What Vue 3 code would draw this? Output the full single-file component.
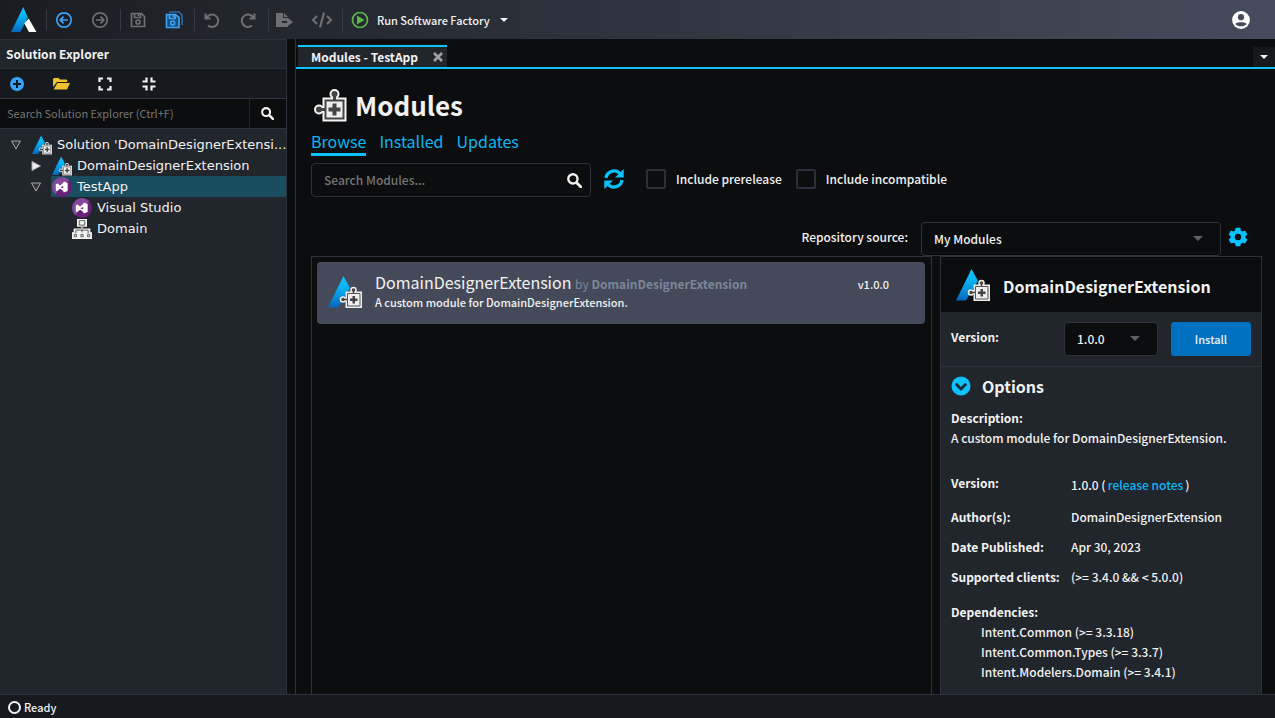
<script setup>
import { ref } from 'vue'

const solutionFilter = ref('')
const moduleFilter = ref('')
const prerelease = ref(false)
const incompatible = ref(false)
const source = ref('My Modules')
const version = ref('1.0.0')

const tree = [
  { label: "Solution 'DomainDesignerExtensi...", level: 0, icon: 'module', state: 'open' },
  { label: 'DomainDesignerExtension', level: 1, icon: 'module', state: 'closed' },
  { label: 'TestApp', level: 1, icon: 'vs', state: 'open', selected: true },
  { label: 'Visual Studio', level: 2, icon: 'vs' },
  { label: 'Domain', level: 2, icon: 'domain' },
]
const tabs = ['Browse', 'Installed', 'Updates']
const dependencies = [
  'Intent.Common (>= 3.3.18)',
  'Intent.Common.Types (>= 3.3.7)',
  'Intent.Modelers.Domain (>= 3.4.1)',
]
</script>

<template>
  <div class="app">
    <svg class="defs" aria-hidden="true">
      <defs>
        <linearGradient id="blue" x1="0" y1="0" x2="0" y2="1">
          <stop offset="0" stop-color="#0fc5ff" />
          <stop offset="0.4" stop-color="#08b0f0" />
          <stop offset="1" stop-color="#0566bd" />
        </linearGradient>
        <linearGradient id="purple" x1="0" y1="0" x2="1" y2="1">
          <stop offset="0.5" stop-color="#84489a" />
          <stop offset="0.5" stop-color="#672179" />
        </linearGradient>
      </defs>
      <symbol id="puzzle" viewBox="0 0 33 33">
        <circle cx="20.500" cy="5" r="4" fill="#444" stroke="#f5f5f5" stroke-width="2" />
        <circle cx="5" cy="20.500" r="4" fill="#444" stroke="#f5f5f5" stroke-width="2" />
        <path d="M8.500 8.500h24v24h-24z" fill="#f5f5f5" />
        <path d="M19 5h3v6h-3zM5 19h6v3H5z" fill="#444" />
        <path d="M11.500 11.500h18v18h-18z" fill="#eee" stroke="#444" stroke-width="2" />
        <path d="M18.500 14.500h4v4h4v4h-4v4h-4v-4h-4v-4h4z" fill="#444" />
      </symbol>
      <symbol id="module" viewBox="0 0 34 32">
        <path d="M0 31.500 15.500 0l6.500 12-12 19.500z" fill="url(#blue)" />
        <circle cx="25.500" cy="14" r="2.500" fill="#444" stroke="#eee" stroke-width="1.500" />
        <circle cx="15" cy="23.500" r="2.500" fill="#444" stroke="#eee" stroke-width="1.500" />
        <path d="M17.500 15.500H34V32H17.500z" fill="#eee" />
        <path d="M24.700 14h1.600v4h-1.600zM15 22.700h4v1.600h-4z" fill="#444" />
        <path d="M19.500 17.500h12.500V30H19.500z" fill="#eee" stroke="#555" />
        <path d="M24.500 20h2.500v2.500h2.500V25H27v2.500h-2.500V25H22v-2.500h2.500z" fill="#444" />
      </symbol>
      <symbol id="vs" viewBox="0 0 18 18">
        <circle cx="9" cy="9" r="9" fill="url(#purple)" />
        <path d="M4.300 6.300v5.400L11 5.500v7L4.300 6.300" fill="none" stroke="#fff" stroke-width="1.800" stroke-linejoin="round" />
        <path d="m10.500 4 3.600 1.500v7L10.500 14z" fill="#fff" />
      </symbol>
      <symbol id="domain" viewBox="0 0 18 18">
        <path d="M4.500 0h9v7h-9zM0 12h6v6H0zm6 0h6v6H6zm6 0h6v6h-6zM1.500 8.500h15V13h-15zM8 6h2v4H8z" fill="#f2f2f2" />
        <path d="M6.500 1.500h5v4h-5zM9 6v6M3.500 13v-3h11v3M2 14h2v2H2zm6 0h2v2H8zm6 0h2v2h-2z" fill="none" stroke="#555" stroke-width=".8" />
      </symbol>
      <symbol id="search" viewBox="0 0 14 14">
        <circle cx="5.500" cy="5.500" r="4.300" fill="none" stroke="currentColor" stroke-width="2.200" />
        <path d="m9 9 3.800 3.800" stroke="currentColor" stroke-width="2.600" stroke-linecap="round" />
      </symbol>
    </svg>

    <header class="topbar">
      <svg class="logo" viewBox="0 0 26 26">
        <path d="M0 25 12.300 0l4.500 10.500L9.500 25z" fill="url(#blue)" />
        <path d="m13.300 16.200 4.400-4.700L25.500 25h-7.600z" fill="#fff" />
      </svg>
      <div class="group">
        <button class="tool blue" aria-label="Back">
          <svg viewBox="0 0 18 18"><circle cx="9" cy="9" r="7.200" /><path d="M13 9H5.500M8.500 5.700 5.200 9l3.300 3.300" /></svg>
        </button>
        <button class="tool" aria-label="Forward">
          <svg viewBox="0 0 18 18"><circle cx="9" cy="9" r="7.200" /><path d="M5 9h7.500M9.500 5.700 12.800 9l-3.300 3.300" /></svg>
        </button>
      </div>
      <div class="group">
        <button class="tool" aria-label="Save">
          <svg viewBox="0 0 18 18"><path d="M2.500 2.500h10l3 3v10h-13zM5.500 2.500v4h6v-4" /><circle cx="9" cy="11" r="2" /><path d="M9.500 3v2" /></svg>
        </button>
        <button class="tool blue" aria-label="Save all">
          <svg viewBox="0 0 18 18"><path class="behind" d="M4 1h10l3 3v10" /><path class="tint" d="M1.500 3.500h9l3.500 3v10H1.500z" /><path d="M4.500 4v3.500h5.500V4" /><circle cx="7.700" cy="12" r="2" /><path d="M8.500 4v2" /></svg>
        </button>
      </div>
      <div class="group">
        <button class="tool" aria-label="Undo">
          <svg viewBox="0 0 18 18"><path d="M2.500 2.500v5h5M3.500 7A6.200 6.200 0 1 1 5 14.500" stroke-width="2" /></svg>
        </button>
        <button class="tool" aria-label="Redo">
          <svg viewBox="0 0 18 18"><path d="M15.500 2.500v5h-5M14.500 7A6.200 6.200 0 1 0 13 14.500" stroke-width="2" /></svg>
        </button>
      </div>
      <div class="group">
        <button class="tool" aria-label="Export">
          <svg viewBox="0 0 18 18"><path class="solid" d="M1 2h7v5h5v3H7v2h6v4H1zM9 2l4 4H9zM13 7l5 4-5 4v-3h-1v-2h1z" /></svg>
        </button>
        <button class="tool wide" aria-label="Code">
          <svg viewBox="0 0 22 18"><path d="M6 5 2 9l4 4M16 5l4 4-4 4M13 1.500l-4 15" stroke-width="2.200" /></svg>
        </button>
      </div>
      <button class="run">
        <svg class="play" viewBox="0 0 18 18"><circle cx="9" cy="9" r="7.500" fill="none" stroke="#5bb84a" stroke-width="1.700" /><path d="M6 4.500 13.500 9 6 13.500z" fill="#5bb84a" /></svg>
        Run Software Factory
        <i class="caret"></i>
      </button>
      <button class="user" aria-label="Account">
        <svg viewBox="0 0 18 18"><circle cx="9" cy="9" r="8" fill="#fff" /><circle cx="9" cy="6.500" r="2.800" fill="#444a59" /><path d="M3.800 12.500C5 10.500 13 10.500 14.200 12.500 11.500 15.300 6.500 15.300 3.800 12.500z" fill="#444a59" /></svg>
      </button>
    </header>

    <div class="body">
      <aside class="sidebar">
        <h2 class="side-title">Solution Explorer</h2>
        <div class="side-tools">
          <button aria-label="Add"><svg viewBox="0 0 14 14"><circle cx="7" cy="7" r="7" fill="#3ba3f5" /><path d="M7 3v8M3 7h8" stroke="#16191d" stroke-width="2" /></svg></button>
          <button aria-label="Open"><svg class="folder" viewBox="0 0 17 12"><path d="M0 9V1l1-1h4.500l1.500 1.500h6.500l.8.800V4H4z" fill="#eec22f" /><path d="M4.300 5H17l-3 6.500H.7z" fill="#eec22f" /></svg></button>
          <button aria-label="Expand all"><svg viewBox="0 0 14 14"><path d="M1.500 5V1.500H5M9 1.500h3.500V5M12.500 9v3.500H9M5 12.500H1.500V9" fill="none" stroke="#f2f2f2" stroke-width="2.200" /></svg></button>
          <button aria-label="Collapse all"><svg viewBox="0 0 14 14"><path d="M.5 4.500h4V.5M9.500.5v4h4M13.500 9.500h-4v4M4.500 13.500v-4h-4" fill="none" stroke="#f2f2f2" stroke-width="2.200" /></svg></button>
        </div>
        <div class="side-search">
          <input v-model="solutionFilter" type="text" placeholder="Search Solution Explorer (Ctrl+F)" aria-label="Search Solution Explorer" />
          <button aria-label="Search"><svg viewBox="0 0 14 14"><use href="#search" /></svg></button>
        </div>
        <ul class="tree">
          <li v-for="node in tree" :key="node.label" :class="'level' + node.level">
            <span class="twist">
              <svg v-if="node.state === 'open'" viewBox="0 0 12 12"><path d="M1.500 2h9L6 10z" fill="#333" stroke="#aaa" /></svg>
              <svg v-else-if="node.state === 'closed'" viewBox="0 0 12 12"><path d="M2 1.500v9L10.500 6z" fill="#eee" stroke="#aaa" /></svg>
            </span>
            <span class="node" :class="{ selected: node.selected }">
              <svg class="node-icon" viewBox="0 0 18 18"><use :href="'#' + node.icon" /></svg>
              <span class="node-label">{{ node.label }}</span>
            </span>
          </li>
        </ul>
      </aside>

      <main class="main">
        <div class="doc-tabs">
          <div class="doc-tab">
            Modules - TestApp
            <button aria-label="Close"><svg viewBox="0 0 10 10"><path d="m1 1 8 8M9 1 1 9" stroke="#a0a0a0" stroke-width="2.600" /></svg></button>
          </div>
          <button class="doc-menu" aria-label="Open tabs"><i class="caret"></i></button>
        </div>

        <div class="content">
          <h1><svg viewBox="0 0 33 33"><use href="#puzzle" /></svg>Modules</h1>
          <nav class="tabs">
            <a v-for="(t, i) in tabs" :key="t" href="#" :class="{ active: i === 0 }">{{ t }}</a>
          </nav>
          <div class="filters">
            <div class="search-box">
              <input v-model="moduleFilter" type="text" placeholder="Search Modules..." aria-label="Search Modules" />
              <button aria-label="Search"><svg viewBox="0 0 14 14"><use href="#search" /></svg></button>
            </div>
            <button class="refresh" aria-label="Refresh">
              <svg viewBox="0 0 20 20"><path d="M2 9A8 8 0 0 1 16 4.800M18 11A8 8 0 0 1 4 15.200" fill="none" stroke="#0bc1ff" stroke-width="3.200" /><path d="M19.700 0v8.500H11zM.3 20v-8.500H9z" fill="#0bc1ff" /></svg>
            </button>
            <label class="check"><input v-model="prerelease" type="checkbox" />Include prerelease</label>
            <label class="check"><input v-model="incompatible" type="checkbox" />Include incompatible</label>
          </div>
          <div class="source">
            <label for="source">Repository source:</label>
            <div class="select"><select id="source" v-model="source"><option>My Modules</option></select><i class="caret"></i></div>
            <button class="gear" aria-label="Settings">
              <svg viewBox="0 0 20 20"><path fill="#0bc1ff" fill-rule="evenodd" d="M7.700.8h4.600l.6 2.700 1.600.9 2.600-.8 2.300 4-2 1.700v1.500l2 1.800-2.300 4-2.600-.9-1.600 1-.6 2.600H7.700l-.6-2.700-1.600-.9-2.600.8-2.300-4 2-1.700V9.300l-2-1.800 2.300-4 2.600.9 1.600-1zM10 6.800a3.200 3.200 0 1 0 0 6.400 3.200 3.200 0 0 0 0-6.400z" /></svg>
            </button>
          </div>

          <div class="panels">
            <section class="list">
              <article class="card">
                <svg class="module-icon" viewBox="0 0 34 32"><use href="#module" /></svg>
                <div class="card-text">
                  <p class="card-name">DomainDesignerExtension <span>by <b>DomainDesignerExtension</b></span></p>
                  <p class="card-desc">A custom module for DomainDesignerExtension.</p>
                </div>
                <span class="card-version">v1.0.0</span>
              </article>
            </section>

            <section class="detail">
              <header class="detail-head">
                <svg class="module-icon" viewBox="0 0 34 32"><use href="#module" /></svg>
                <h2>DomainDesignerExtension</h2>
              </header>
              <div class="install-row">
                <label for="version">Version:</label>
                <div class="select"><select id="version" v-model="version"><option>1.0.0</option></select><i class="caret"></i></div>
                <button class="install">Install</button>
              </div>
              <div class="info">
                <h3>
                  <svg viewBox="0 0 20 20"><circle cx="10" cy="10" r="9.500" fill="#0bc1ff" /><path d="m4.800 7.800 5.200 5.200 5.200-5.200" fill="none" stroke="#21252c" stroke-width="2.800" /></svg>
                  Options
                </h3>
                <p class="label">Description:</p>
                <p>A custom module for DomainDesignerExtension.</p>
                <dl>
                  <div class="first"><dt>Version:</dt><dd>1.0.0 (<a href="#">release notes</a>)</dd></div>
                  <div><dt>Author(s):</dt><dd>DomainDesignerExtension</dd></div>
                  <div><dt>Date Published:</dt><dd>Apr 30, 2023</dd></div>
                  <div><dt>Supported clients:</dt><dd>(&gt;= 3.4.0 &amp;&amp; &lt; 5.0.0)</dd></div>
                </dl>
                <p class="label">Dependencies:</p>
                <ul><li v-for="d in dependencies" :key="d">{{ d }}</li></ul>
              </div>
            </section>
          </div>
        </div>
      </main>
    </div>

    <footer class="status"><i class="ring"></i>Ready</footer>
  </div>
</template>

<style>
body { margin: 0; background: #0c0d0f; }
</style>

<style scoped>
* { box-sizing: border-box; }
.app {
  height: 100vh;
  display: flex;
  flex-direction: column;
  overflow: hidden;
  background: #0c0d0f;
  color: #f2f2f2;
  font: 500 12px/20px "Noto Sans CJK SC", "Noto Sans", sans-serif;
}
.defs { position: absolute; width: 0; height: 0; }
svg { display: block; flex: none; }
h1, h2, h3, p, ul, dl, dd { margin: 0; padding: 0; }
ul { list-style: none; }
button { padding: 0; border: 0; background: none; color: inherit; font: inherit; display: flex; align-items: center; justify-content: center; }
input, select { font: inherit; color: inherit; }
input::placeholder { color: #757575; opacity: 1; }
a { color: #0bb8f5; text-decoration: none; }
.caret { width: 0; height: 0; border: 4px solid transparent; border-top-color: #f2f2f2; border-bottom: 0; }

.topbar {
  height: 39px;
  flex: none;
  display: flex;
  align-items: center;
  padding: 0 24px 0 11px;
  background: linear-gradient(90deg, #191c21, #464c5c);
}
.logo { width: 26px; height: 26px; margin-right: 9px; }
.group { display: flex; align-items: center; justify-content: center; width: 74px; height: 22px; padding-right: 3px; gap: 18px; border-left: 1px solid #353a45; }
.tool svg { width: 18px; height: 18px; fill: none; stroke: #6d6f73; stroke-width: 1.700; }
.tool.wide svg { width: 22px; }
.tool.blue svg { stroke: #3ba3f5; }
.tool .behind { stroke: #2b6a9f; }
.tool .tint { fill: #1c4a73; }
.tool .solid { fill: #6d6f73; stroke: none; }
.run { height: 22px; padding-left: 8px; border-left: 1px solid #353a45; font-size: 11px; }
.play { width: 18px; height: 18px; margin-right: 8px; }
.run .caret { margin-left: 10px; }
.user { margin-left: auto; }
.user svg { width: 20px; height: 20px; }

.body { flex: 1; min-height: 0; display: flex; gap: 8px; }
.sidebar { width: 287px; flex: none; display: flex; flex-direction: column; background: #21252c; border: solid #2e323d; border-width: 1px 1px 0 0; }
.side-title { height: 29px; padding-left: 6px; border-bottom: 1px solid #2e323d; font-size: 12px; line-height: 28px; font-weight: 700; }
.side-tools { height: 30px; display: flex; align-items: center; gap: 26px; padding-left: 8px; background: #16191d; border-bottom: 1px solid #2e323d; }
.side-tools button { width: 18px; }
.side-tools svg { width: 14px; height: 14px; }
.side-tools .folder { width: 17px; height: 12px; }
.side-search { height: 30px; display: flex; background: #0c0d0f; border-bottom: 1px solid #2e323d; }
.side-search input { flex: 1; min-width: 0; padding: 0 7px 2px; border: 0; background: none; font-size: 11px; font-weight: 400; }
.side-search button { width: 37px; padding-right: 2px; border-left: 1px solid #21252c; }
.side-search svg { width: 13px; height: 13px; }
.tree { padding-top: 5px; font: 400 13px/20px "DejaVu Sans", sans-serif; }
.tree li { display: flex; height: 21px; }
.level0 { padding-left: 10px; }
.level1 { padding-left: 30px; }
.level2 { padding-left: 50px; }
.twist { width: 21px; flex: none; display: flex; align-items: center; }
.twist svg { width: 12px; height: 12px; }
.node { flex: 1; min-width: 0; display: flex; align-items: center; gap: 5px; padding-left: 1px; }
.node.selected { background: #1b4d60; }
.node-icon { width: 20px; height: 20px; }
.node-label { white-space: nowrap; padding-top: 1px; }

.main { flex: 1; min-width: 0; display: flex; flex-direction: column; border-left: 1px solid #2e323d; }
.doc-tabs { height: 30px; flex: none; display: flex; align-items: flex-end; justify-content: space-between; padding-left: 2px; border-bottom: 2px solid #0bc1ff; }
.doc-tab { height: 22px; display: flex; align-items: center; gap: 15px; padding: 0 4px 0 13px; background: #21252c; border-top: 2px solid #0bc1ff; font-weight: 700; }
.doc-tab svg { width: 10px; height: 10px; }
.doc-menu { width: 22px; height: 20px; background: #16191d; }

.content { flex: 1; min-height: 0; display: flex; flex-direction: column; padding: 16px 13px 0 15px; }
h1 { display: flex; align-items: center; gap: 8px; padding-left: 3px; font-size: 26px; line-height: 40px; font-weight: 700; }
h1 svg { width: 33px; height: 33px; }
.tabs { display: flex; gap: 13px; margin-top: 6px; font-size: 16px; line-height: 20px; font-weight: 400; }
.tabs a { padding-bottom: 2px; border-bottom: 3px solid transparent; }
.tabs a.active { border-color: #0bc1ff; }
.filters { display: flex; align-items: center; margin-top: 7px; }
.search-box { width: 280px; height: 34px; display: flex; border: 1px solid #2e323d; border-radius: 4px; }
.search-box input { flex: 1; min-width: 0; padding: 0 12px; border: 0; background: none; }
.search-box button { width: 32px; }
.search-box svg { width: 15px; height: 15px; }
.refresh { margin: 0 22px 0 13px; padding-bottom: 2px; }
.refresh svg { width: 20px; height: 20px; }
.check { display: flex; align-items: center; gap: 10px; margin-right: 14px; padding-bottom: 2px; }
.check input { appearance: none; width: 20px; height: 20px; margin: 0; border: 2px solid #2a2f39; border-radius: 2px; }
.source { display: flex; align-items: flex-start; justify-content: flex-end; margin-top: 25px; padding-right: 14px; }
.source label { line-height: 30px; }
.source .select { width: 300px; margin: 0 7px 0 13px; }
.select { position: relative; height: 34px; }
.select select { appearance: none; width: 100%; height: 100%; padding: 0 12px; background: #0c0d0f; border: 1px solid #2e323d; border-radius: 4px; }
.select .caret { position: absolute; right: 18px; top: 14px; border-width: 5px; border-bottom-width: 0; border-top-color: #606060; pointer-events: none; }
.gear { height: 30px; }
.gear svg { width: 20px; height: 20px; }

.panels { flex: 1; min-height: 0; display: flex; gap: 8px; }
.list { flex: 1; min-width: 0; padding: 5px 6px 5px 5px; border: solid #2e323d; border-width: 1px 1px 0; }
.card { display: flex; align-items: flex-start; height: 62px; padding: 10px 36px 0 11px; background: #444a59; border-radius: 4px; }
.module-icon { width: 34px; height: 32px; }
.card .module-icon { margin-top: 4px; }
.card-text { flex: 1; min-width: 0; margin-left: 13px; }
.card-name { font-size: 16px; line-height: 20px; font-weight: 400; }
.card-name span { font-size: 12px; color: #7d8699; }
.card-name b { font-weight: 700; }
.card-desc { font-size: 11px; line-height: 16px; }
.card-version { font-size: 11px; line-height: 24px; }
.detail { width: 322px; flex: none; background: #21252c; border: solid #2e323d; border-width: 1px 1px 0; }
.detail-head { height: 55px; display: flex; align-items: center; gap: 13px; padding-left: 15px; background: #0c0d0f; }
.detail-head h2 { padding-top: 2px; font-size: 16px; line-height: 26px; font-weight: 700; }
.install-row { height: 55px; display: flex; align-items: center; padding: 0 10px; border-bottom: 1px solid #2e323d; }
.install-row label { flex: 1; padding-bottom: 4px; font-weight: 700; }
.install-row .select { width: 94px; }
.install { width: 80px; height: 34px; margin-left: 13px; background: #0070c0; border-radius: 3px; font-size: 11px; }
.info { padding: 8px 10px; }
h3 { display: flex; align-items: center; gap: 11px; margin-bottom: 11px; font-size: 16px; line-height: 22px; font-weight: 700; }
h3 svg { width: 20px; height: 20px; }
.label, dt { font-weight: 700; }
dl { margin: 25px 0 15px; }
dl div { display: flex; margin-bottom: 10px; }
dl .first { margin-bottom: 12px; }
.first dd { padding-top: 2px; }
dt { width: 120px; }
dd a { margin: 0 2px; }
.info li { padding-left: 30px; }
.status { height: 24px; flex: none; display: flex; align-items: center; gap: 3px; padding: 1px 0 0 8px; background: #16191d; border-top: 1px solid #2e323d; font-size: 11px; }
.ring { width: 13px; height: 13px; border: 2px solid #f2f2f2; border-radius: 50%; }
</style>
